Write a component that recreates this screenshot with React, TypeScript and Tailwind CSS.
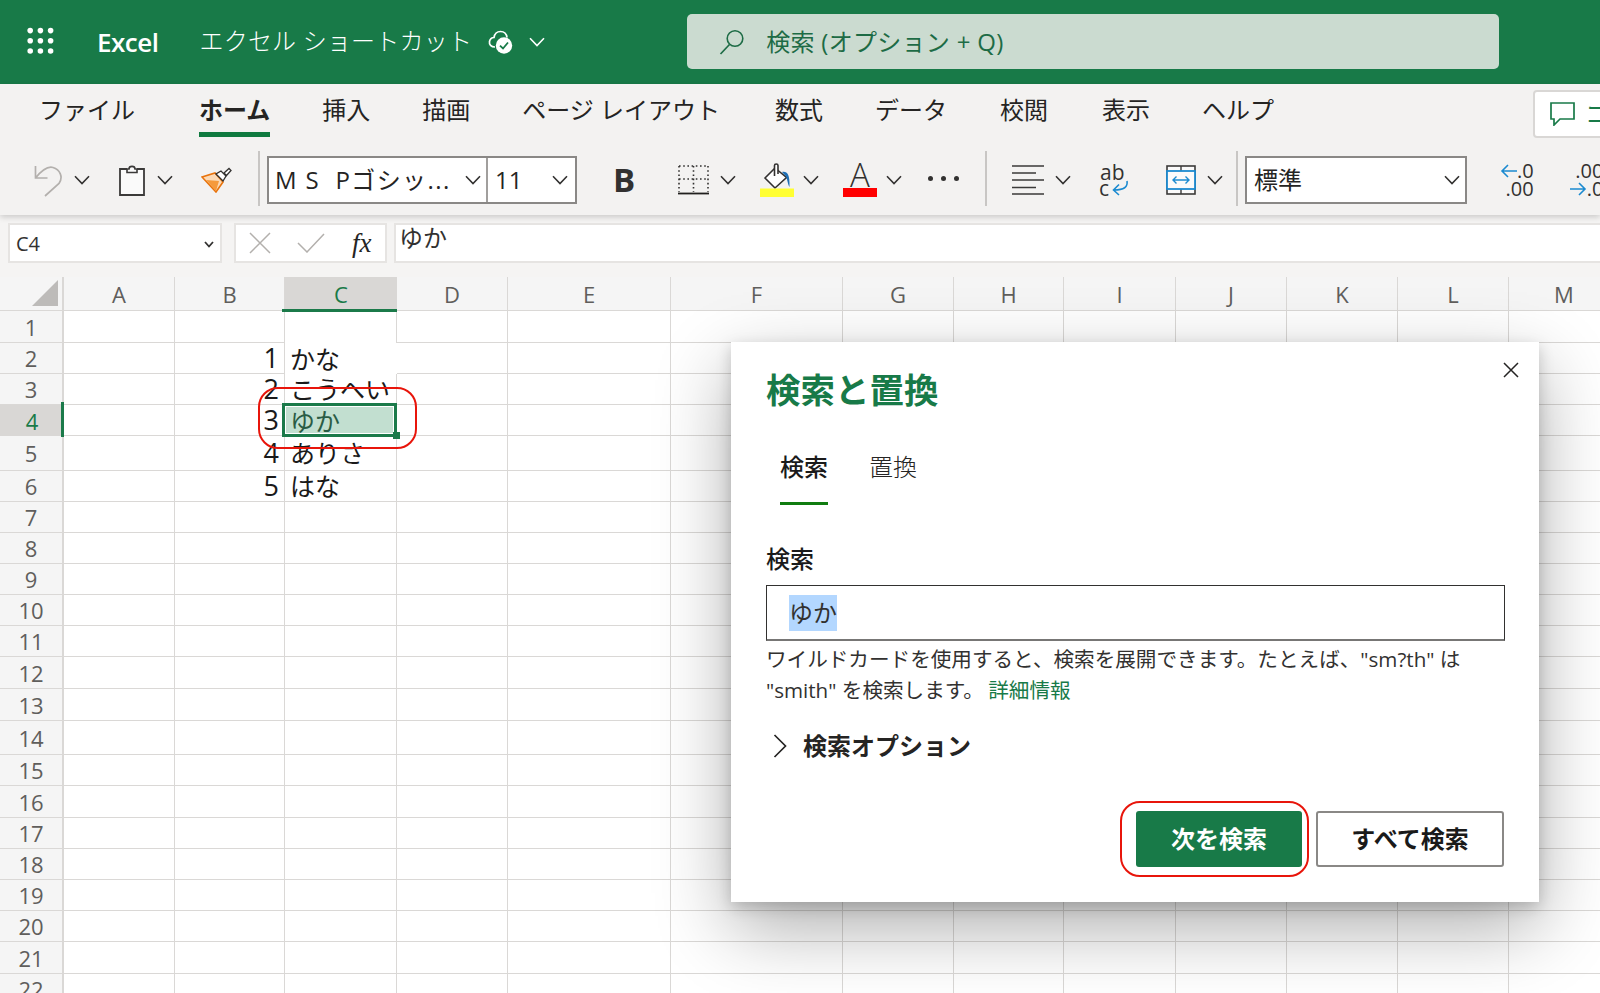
import React from "react";

const FONT = '"Open Sans","Noto Sans CJK JP","Noto Sans",sans-serif';
const colLabels = ["A", "B", "C", "D", "E", "F", "G", "H", "I", "J", "K", "L", "M"];
const rowHeights = [32, 31, 31, 31, 35, 31, 31, 31, 31, 31, 31, 32, 32, 34, 31, 32, 31, 31, 31, 31, 32, 31];

function Chevron({ className = "", color = "#323130" }: { className?: string; color?: string }) {
  return (
    <svg className={className} width="16" height="10" viewBox="0 0 16 10" fill="none">
      <path d="M1 1.2 L8 8.5 L15 1.2" stroke={color} strokeWidth="1.6" />
    </svg>
  );
}

function Waffle() {
  const pts = [3, 13.2, 23.4];
  return (
    <svg width="27" height="28" viewBox="0 0 27 28" className="ml-[27px] -mt-[2px] shrink-0">
      {pts.map((y) => pts.map((x) => <circle key={`${x}-${y}`} cx={x + 0.2} cy={y + 0.6} r="2.8" fill="#fff" />))}
    </svg>
  );
}

function CloudCheck() {
  return (
    <svg width="26" height="26" viewBox="0 0 26 26" fill="none" className="ml-[16px] shrink-0">
      <path d="M7 18 C3 18 1 15.5 1.5 12.5 C2 10 4 8.6 6 8.5 C6.6 5 9 2.5 12.5 2.5 C16 2.5 18.5 5 19 8.5" stroke="#fff" strokeWidth="1.7" />
      <circle cx="16" cy="16.5" r="8.2" fill="#fff" />
      <path d="M12 16.7 L15 19.5 L20 13.5" stroke="#187a48" strokeWidth="1.8" />
    </svg>
  );
}

function SearchIcon() {
  return (
    <svg width="26" height="26" viewBox="0 0 26 26" fill="none" className="shrink-0">
      <circle cx="16" cy="9.5" r="7.8" stroke="#1d6b45" strokeWidth="1.6" />
      <path d="M10.5 15.5 L1.5 25" stroke="#1d6b45" strokeWidth="1.7" />
    </svg>
  );
}

function UndoIcon() {
  return (
    <svg width="30" height="33" viewBox="0 0 30 33" fill="none" className="ml-[33px] shrink-0">
      <path d="M2.5 2 V14 H14.5 M2.5 14 C9 6 15 2 20 3.5 C27 5.5 30.5 13 26 19.5 L12 32" stroke="#b3b0ad" strokeWidth="1.7" />
    </svg>
  );
}

function ClipboardIcon() {
  return (
    <svg width="26" height="31" viewBox="0 0 26 31" fill="none" className="ml-[29px] shrink-0">
      <path d="M8 4 H1 V30 H25 V4 H18" fill="#fafafa" stroke="#3b3a39" strokeWidth="1.8" />
      <path d="M8 7.5 V4 H10 C10 0.5 16 0.5 16 4 H18 V7.5 Z" fill="#fafafa" stroke="#3b3a39" strokeWidth="1.6" />
    </svg>
  );
}

function BrushIcon() {
  return (
    <svg width="31" height="26" viewBox="0 0 31 26" fill="none" className="ml-[28px] shrink-0">
      <path d="M1 10 L14 6 L22 15 L15 25 Z" fill="#fbd9b5" stroke="#e8730c" strokeWidth="1.6" />
      <path d="M5 13 L18 14 L15 24 Z" fill="#f59a3c" />
      <path d="M15 7 L22 14 L25 9 L20 4 Z" fill="#fff" stroke="#323130" strokeWidth="1.3" />
      <path d="M23 6 L28 1.5 L30 3.5 L25.5 8.5 Z" fill="#fff" stroke="#323130" strokeWidth="1.3" />
    </svg>
  );
}

function BorderIcon() {
  return (
    <svg width="31" height="30" viewBox="0 0 31 30" fill="none" className="ml-[39px] shrink-0">
      <path d="M1 1 H30 M1 14 H30 M1 1 V27 M15.5 1 V27 M30 1 V27" stroke="#323130" strokeWidth="1.6" strokeDasharray="1.6 2.6" />
      <path d="M0 28.5 H31" stroke="#201f1e" strokeWidth="1.8" />
    </svg>
  );
}

function BucketIcon() {
  return (
    <svg width="34" height="34" viewBox="0 0 34 34" fill="none" className="ml-[24px] -mt-[1px] shrink-0">
      <path d="M5 15 L15 5 L26.5 14.5 L15 25 Z" fill="#fff" stroke="#323130" strokeWidth="1.6" />
      <path d="M14.5 13 V2.5 C14.5 0.5 18 0.5 18 2.5 V11" stroke="#323130" strokeWidth="1.6" fill="#fff" />
      <path d="M22 9 C27 8 30 11 29.5 24 C28 22 27.5 17 26 13.5 Z" fill="#1f6fb5" />
      <rect x="0" y="25.5" width="34" height="8.5" fill="#ffff33" />
    </svg>
  );
}

function AlignIcon() {
  return (
    <svg width="32" height="30" viewBox="0 0 32 30" fill="none" className="ml-[25px] shrink-0">
      <path d="M0 1 H32 M0 8 H24 M0 15 H32 M0 22.5 H24 M0 29 H32" stroke="#3b3a39" strokeWidth="1.6" />
    </svg>
  );
}

function MergeIcon() {
  return (
    <svg width="30" height="30" viewBox="0 0 30 30" fill="none" className="ml-[35px] shrink-0">
      <rect x="1" y="1" width="28" height="28" fill="#fafafa" stroke="#3b3a39" strokeWidth="1.6" />
      <path d="M15 1 V6 M15 24 V29" stroke="#3b3a39" strokeWidth="1.4" />
      <rect x="1" y="6" width="28" height="18" fill="#fafafa" stroke="#1b8ad0" strokeWidth="1.8" />
      <path d="M7 15 H23 M10.5 11.5 L7 15 L10.5 18.5 M19.5 11.5 L23 15 L19.5 18.5" stroke="#1b8ad0" strokeWidth="1.4" />
    </svg>
  );
}

function WrapArrow() {
  return (
    <svg width="18" height="16" viewBox="0 0 18 16" fill="none" className="ml-[2px]">
      <path d="M16 1 C17 7 13 10 3 10 M8 4.5 L2.5 10 L8 15" stroke="#1b8ad0" strokeWidth="1.6" />
    </svg>
  );
}

function CommentIcon() {
  return (
    <svg width="25" height="24" viewBox="0 0 25 24" fill="none" className="shrink-0">
      <path d="M1 1 H24 V17 H10 L4 23 V17 H1 Z" stroke="#187a48" strokeWidth="1.7" />
    </svg>
  );
}

function LeftArrow() {
  return (
    <svg width="17" height="14" viewBox="0 0 17 14" fill="none">
      <path d="M17 7 H2 M8 1 L2 7 L8 13" stroke="#1b8ad0" strokeWidth="1.6" />
    </svg>
  );
}

function RightArrow() {
  return (
    <svg width="17" height="14" viewBox="0 0 17 14" fill="none">
      <path d="M0 7 H15 M9 1 L15 7 L9 13" stroke="#1b8ad0" strokeWidth="1.6" />
    </svg>
  );
}

function Divider({ className }: { className: string }) {
  return <div className={`w-[2px] h-[55px] bg-[#c8c6c4] shrink-0 -mt-[3px] ${className}`} />;
}

function FormatDec({ className, top, bottom, arrowTop }: { className: string; top: string; bottom: string; arrowTop: boolean }) {
  return (
    <div className={`shrink-0 flex flex-col items-end text-[20px] leading-[18px] text-[#323130] ${className}`}>
      <div className="flex items-center h-[18px]">
        {arrowTop && <LeftArrow />}
        <span>{top}</span>
      </div>
      <div className="flex items-center h-[18px]">
        {!arrowTop && <RightArrow />}
        <span>{bottom}</span>
      </div>
    </div>
  );
}

function Cell({ r, c }: { r: number; c: number }) {
  const isC = c === 2;
  let border = "border-r border-b border-[#dad8d6]";
  if (isC && r === 0) border = "border-r border-[#dad8d6]";
  if (isC && r === 1) border = "";
  const sel = isC && r === 3;
  const bText: Record<number, string> = { 1: "1", 2: "2", 3: "3", 4: "4", 5: "5" };
  const cText: Record<number, string> = { 1: "かな", 2: "こうへい", 3: "ゆか", 4: "ありさ", 5: "はな" };
  if (sel) {
    return (
      <div className="relative flex items-center min-h-0 pl-[5px] bg-[#c2dfd0] text-[25px] leading-[24px] text-[#2a5c45]">
        <span>ゆか</span>
        <div className="absolute -left-[3px] -top-[2px] right-0 -bottom-[1px] border-[3px] border-[#1b7a4a] outline outline-1 -outline-offset-4 outline-white" />
        <div className="absolute -right-[3px] -bottom-[3px] w-[7px] h-[7px] bg-[#1b7a4a]" />
      </div>
    );
  }
  if (c === 1 && bText[r]) {
    return (
      <div className={`flex items-center justify-end min-h-0 pr-[5px] text-[27px] leading-[24px] text-[#1a1a1a] ${border}`}>{bText[r]}</div>
    );
  }
  if (isC && cText[r]) {
    return (
      <div className={`flex items-center min-h-0 pl-[5px] text-[25px] leading-[24px] text-[#1a1a1a] whitespace-nowrap ${border}`}>{cText[r]}</div>
    );
  }
  return <div className={border} />;
}

export default function App() {
  return (
    <div className="relative w-[1600px] h-[993px] overflow-hidden bg-white" style={{ fontFamily: FONT }}>
      {/* Title bar */}
      <header className="flex items-center h-[84px] bg-[#187a48] text-white">
        <Waffle />
        <span className="ml-[43px] text-[26px] font-semibold tracking-[-0.5px] mt-[1px]">Excel</span>
        <span className="ml-[41px] text-[24px] font-light whitespace-nowrap tracking-[0.2px] -mt-[2px]">エクセル ショートカット</span>
        <CloudCheck />
        <Chevron className="ml-[15px]" color="#ffffff" />
        <div className="ml-[142px] w-[812px] h-[55px] -mt-[1px] rounded-[5px] bg-[#cbdbd0] flex items-center pl-[32px] shrink-0">
          <SearchIcon />
          <span className="ml-[21px] text-[24px] tracking-[0.3px] text-[#1d6b45] whitespace-nowrap">検索 (オプション + Q)</span>
        </div>
      </header>

      {/* Ribbon */}
      <div className="relative z-10 bg-[#f3f2f1] shadow-[0_2px_6px_rgba(0,0,0,0.18)]">
        <div className="flex items-start h-[66px] pt-[9px] pl-[39px] text-[24px] leading-[34px] text-[#252423] whitespace-nowrap">
          <span className="mr-[64px]">ファイル</span>
          <div className="flex flex-col items-stretch mr-[52px]">
            <span className="font-bold h-[34px]">ホーム</span>
            <div className="mt-[5px] h-[5px] bg-[#0f7a3f]" />
          </div>
          <span className="mr-[52px]">挿入</span>
          <span className="mr-[52px]">描画</span>
          <span className="mr-[55px]">ページ レイアウト</span>
          <span className="mr-[52px]">数式</span>
          <span className="mr-[53px]">データ</span>
          <span className="mr-[54px]">校閲</span>
          <span className="mr-[52px]">表示</span>
          <span>ヘルプ</span>
          <div className="ml-[259px] -mt-[3px] w-[120px] h-[48px] shrink-0 rounded-[4px] border-2 border-[#d9d7d5] bg-white flex items-center pl-[15px] text-[#187a48]">
            <CommentIcon />
            <span className="ml-[10px]">コメント</span>
          </div>
        </div>

        <div className="flex items-center h-[65px] pb-[5px] text-[#252423] whitespace-nowrap overflow-hidden">
          <UndoIcon />
          <Chevron className="ml-[11px] shrink-0" />
          <ClipboardIcon />
          <Chevron className="ml-[12px] shrink-0" />
          <BrushIcon />
          <Divider className="ml-[26px]" />
          <div className="ml-[7px] flex w-[310px] h-[48px] border-2 border-[#8a8886] bg-white shrink-0 text-[24px]">
            <div className="flex items-center w-[219px] pl-[6px] pr-[5px] border-r-2 border-[#a19f9d]">
              <span className="flex-1 tracking-[1.4px] overflow-hidden">M S&nbsp;&nbsp;Pゴシッ...</span>
              <Chevron />
            </div>
            <div className="flex items-center flex-1 pl-[7px] pr-[7px]">
              <span className="flex-1">11</span>
              <Chevron />
            </div>
          </div>
          <span className="ml-[32px] w-[30px] text-center text-[33px] font-bold text-[#323130] shrink-0" style={{ fontFamily: '"Open Sans",sans-serif' }}>B</span>
          <BorderIcon />
          <Chevron className="ml-[11px] shrink-0" />
          <BucketIcon />
          <Chevron className="ml-[9px] shrink-0" />
          <div className="ml-[24px] w-[34px] flex flex-col items-center shrink-0 -mt-[1px]">
            <span className="text-[33px] leading-[26px] font-light text-[#323130]">A</span>
            <div className="w-[34px] h-[9px] bg-[#ff0000]" />
          </div>
          <Chevron className="ml-[9px] shrink-0" />
          <div className="ml-[26px] w-[31px] flex justify-between shrink-0 -mt-[4px]">
            <div className="w-[5px] h-[5px] rounded-full bg-[#323130]" />
            <div className="w-[5px] h-[5px] rounded-full bg-[#323130]" />
            <div className="w-[5px] h-[5px] rounded-full bg-[#323130]" />
          </div>
          <Divider className="ml-[26px]" />
          <AlignIcon />
          <Chevron className="ml-[11px] shrink-0" />
          <div className="ml-[28px] w-[32px] flex flex-col shrink-0 text-[#323130] text-[21px] leading-[15px]">
            <span className="pl-[1px]">ab</span>
            <div className="flex items-end">
              <span>c</span>
              <WrapArrow />
            </div>
          </div>
          <MergeIcon />
          <Chevron className="ml-[11px] shrink-0" />
          <Divider className="ml-[13px]" />
          <div className="ml-[7px] flex items-center w-[222px] h-[48px] border-2 border-[#8a8886] bg-white shrink-0 pl-[7px] pr-[5px] text-[24px]">
            <span className="flex-1">標準</span>
            <Chevron />
          </div>
          <FormatDec className="ml-[33px]" top=".0" bottom=".00" arrowTop={true} />
          <FormatDec className="ml-[36px]" top=".00" bottom=".0" arrowTop={false} />
        </div>
      </div>

      {/* Formula bar */}
      <div className="flex h-[62px] pt-[8px] bg-[#f5f4f3]">
        <div className="ml-[8px] flex items-center w-[214px] h-[40px] border-2 border-[#e6e4e2] bg-white pl-[6px] pr-[6px] pt-[2px] text-[20px] text-[#323130] shrink-0">
          <span className="flex-1">C4</span>
          <svg width="10" height="7" viewBox="0 0 10 7" fill="none">
            <path d="M1 1 L5 5.5 L9 1" stroke="#323130" strokeWidth="1.8" />
          </svg>
        </div>
        <div className="ml-[12px] flex items-center w-[153px] h-[40px] border-2 border-[#e6e4e2] bg-white shrink-0">
          <svg width="22" height="22" viewBox="0 0 22 22" fill="none" className="ml-[13px]">
            <path d="M1 1 L21 21 M21 1 L1 21" stroke="#b3b0ad" strokeWidth="1.5" />
          </svg>
          <svg width="28" height="20" viewBox="0 0 28 20" fill="none" className="ml-[26px]">
            <path d="M1 10 L10 19 L27 1" stroke="#b3b0ad" strokeWidth="1.5" />
          </svg>
          <span className="ml-[27px] text-[27px] italic text-[#252423] leading-none" style={{ fontFamily: '"Liberation Serif",serif' }}>fx</span>
        </div>
        <div className="ml-[7px] flex-1 h-[40px] border-2 border-[#e6e4e2] border-r-0 bg-white pl-[3px] text-[24px] leading-[26px] text-[#323130]">ゆか</div>
      </div>

      {/* Grid */}
      <div className="grid grid-cols-[64px_111px_110px_112px_111px_163px_172px_111px_110px_112px_111px_111px_111px_111px] grid-rows-[34px] auto-rows-min w-[1620px]">
        <div className="relative bg-[#f5f5f5] border-r-2 border-b border-[#dad8d6]">
          <svg width="26" height="26" viewBox="0 0 26 26" className="absolute left-[32px] top-[3px]">
            <path d="M26 0 V26 H0 Z" fill="#bdbbb9" />
          </svg>
        </div>
        {colLabels.map((l, i) =>
          i === 2 ? (
            <div key={l} className="relative flex items-center justify-center bg-[#d9d7d5] text-[22px] text-[#187a48] pt-[1px]">
              {l}
              <div className="absolute -left-[3px] right-0 -bottom-[1px] h-[3px] bg-[#1b7a4a]" />
            </div>
          ) : (
            <div key={l} className="flex items-center justify-center bg-[#f5f5f5] border-r border-b border-[#dad8d6] text-[22px] text-[#605e5c] pt-[1px]">
              {l}
            </div>
          )
        )}
        {rowHeights.map((h, r) => (
          <div key={r} className="contents">
            <div
              style={{ height: h }}
              className={
                r === 3
                  ? "relative flex items-center justify-center bg-[#d9d7d5] text-[22px] leading-[24px] text-[#187a48]"
                  : "flex items-center justify-center bg-[#f5f5f5] border-r-2 border-b border-[#dad8d6] text-[22px] leading-[24px] text-[#605e5c]"
              }
            >
              {r + 1}
              {r === 3 && <div className="absolute right-0 -top-[3px] -bottom-[1px] w-[3px] bg-[#1b7a4a]" />}
            </div>
            {colLabels.map((_, c) => (
              <Cell key={c} r={r} c={c} />
            ))}
          </div>
        ))}
      </div>

      {/* Annotation around the selected cell */}
      <div className="absolute left-[258px] top-[387px] w-[159px] h-[62px] rounded-[20px] border-2 border-[#e8150b] z-20" />

      {/* Dialog */}
      <div className="absolute left-[731px] top-[342px] w-[808px] h-[560px] z-30 bg-white flex flex-col pl-[35px] pr-[35px] pt-[24px] shadow-[0_26px_70px_rgba(0,0,0,0.32),0_5px_14px_rgba(0,0,0,0.18)] text-[#252423]">
        <svg width="16" height="16" viewBox="0 0 16 16" fill="none" className="absolute left-[772px] top-[20px]">
          <path d="M1 1 L15 15 M15 1 L1 15" stroke="#252423" strokeWidth="1.5" />
        </svg>
        <h1 className="text-[34.5px] leading-[48px] font-bold text-[#187a48]">検索と置換</h1>
        <div className="flex mt-[36px] ml-[14px] text-[24px] leading-[34px]">
          <div className="flex flex-col">
            <span className="font-medium text-[#1a1a1a]">検索</span>
            <div className="mt-[18px] h-[3px] bg-[#107c10]" />
          </div>
          <span className="ml-[41px] font-light">置換</span>
        </div>
        <label className="mt-[37px] text-[24px] leading-[34px] font-medium text-[#1a1a1a]">検索</label>
        <div className="mt-[9px] h-[56px] w-[739px] border border-b-2 border-[#323130] border-b-[#777675] flex items-center pl-[22px] shrink-0">
          <span className="h-[36px] leading-[36px] text-[24px] bg-[#b3d7ff] text-[#323130]">ゆか</span>
        </div>
        <p className="mt-[3px] text-[20.6px] leading-[31px] text-[#323130] whitespace-nowrap">
          ワイルドカードを使用すると、検索を展開できます。たとえば、"sm?th" は
          <br />
          "smith" を検索します。 <a className="-ml-[1px] text-[#187a48]">詳細情報</a>
        </p>
        <div className="mt-[23px] flex items-center h-[34px]">
          <svg width="14" height="24" viewBox="0 0 14 24" fill="none" className="ml-[7px]">
            <path d="M1.5 1 L12.5 12 L1.5 23" stroke="#252423" strokeWidth="1.7" />
          </svg>
          <span className="ml-[16px] text-[24px] font-bold text-[#252423]">検索オプション</span>
        </div>
        <div className="mt-[48px] flex justify-end gap-[14px] text-[24px] font-bold">
          <button className="w-[166px] h-[56px] rounded-[3px] bg-[#187a48] text-white">次を検索</button>
          <button className="w-[188px] h-[56px] rounded-[3px] border-2 border-[#8a8886] bg-white text-[#1a1a1a]">すべて検索</button>
        </div>
        <div className="absolute left-[389px] top-[459px] w-[189px] h-[76px] rounded-[20px] border-2 border-[#e8150b]" />
      </div>
    </div>
  );
}
